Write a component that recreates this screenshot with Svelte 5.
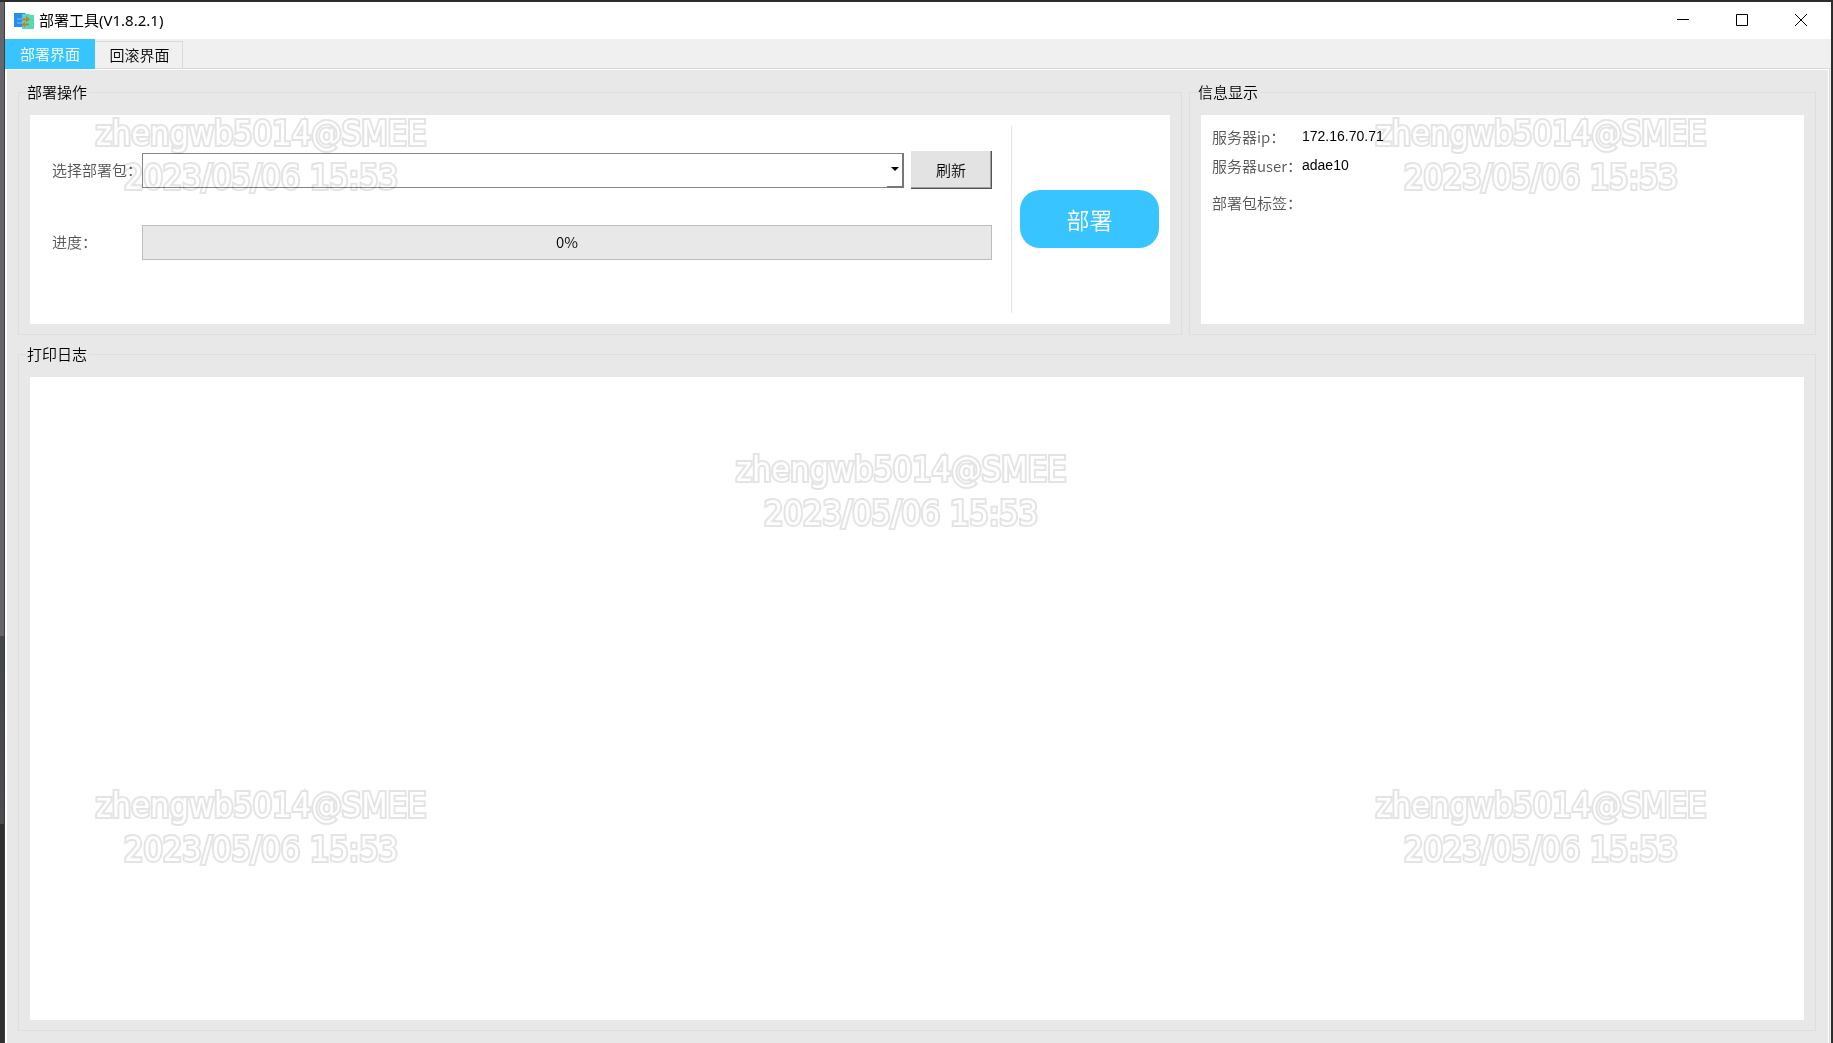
<script lang="ts">
	let tabs = ['部署界面', '回滚界面'];
	let activeTab = $state(0);
	let selected = $state('');
	let progress = $state(0);

	const server = { ip: '172.16.70.71', user: 'adae10', tag: '' };

	// centre of each watermark, in percent of the window
	const marks = [
		{ x: 14.24, y: 14.9 },
		{ x: 84.07, y: 14.9 },
		{ x: 49.16, y: 47.1 },
		{ x: 14.24, y: 79.3 },
		{ x: 84.07, y: 79.3 }
	];
</script>

<div class="desktop">
	<div class="window">
		<header class="titlebar">
			<svg class="logo" width="20" height="18" viewBox="0 0 20 18">
				<path d="M0 1h11l2 2v12H0z" fill="#2b8bf2" />
				<path d="M8 2h7l1 1h4v14H8z" fill="#52dcb4" />
				<path d="M3 7h5M3 11h5" stroke="#7cc4fb" stroke-width="1" />
				<path d="M8 7.5h6M8 12.5h7" stroke="#c67a3e" stroke-width="2" />
				<path d="M12 4l4 3.5-4 3zM11 9.5l-3 3 3 3z" fill="#c67a3e" />
			</svg>
			<h1>部署工具(V1.8.2.1)</h1>
			<div class="window-buttons">
				<button aria-label="最小化">
					<svg width="12" height="12" viewBox="0 0 12 12"><path d="M0 5.5h12" stroke="#000" /></svg>
				</button>
				<button aria-label="最大化">
					<svg width="12" height="12" viewBox="0 0 12 12"><path d="M.5.5h11v11H.5z" fill="none" stroke="#000" /></svg>
				</button>
				<button aria-label="关闭">
					<svg width="12" height="12" viewBox="0 0 12 12"><path d="M0 0l12 12M12 0L0 12" stroke="#000" /></svg>
				</button>
			</div>
		</header>

		<nav class="tabs">
			{#each tabs as tab, index}
				<button class="tab" class:active={activeTab === index} onclick={() => (activeTab = index)}>{tab}</button>
			{/each}
		</nav>

		<main>
			<div class="top-row">
				<fieldset class="operate">
					<legend>部署操作</legend>
					<div class="panel operate-panel">
						<div class="form">
							<div class="row">
								<label for="package">选择部署包：</label>
								<div class="combo">
									<select id="package" bind:value={selected}>
										<option value=""></option>
									</select>
									<span class="drop">
										<svg width="8" height="5" viewBox="0 0 8 5"><path d="M0 0h8L4 4z" fill="#000" /></svg>
									</span>
								</div>
								<button class="refresh">刷新</button>
							</div>
							<div class="row">
								<span class="label" id="progress-label">进度：</span>
								<div class="progress" role="progressbar" aria-labelledby="progress-label" aria-valuenow={progress}>
									{progress}%
								</div>
							</div>
						</div>
						<div class="deploy-side">
							<button class="deploy">部署</button>
						</div>
					</div>
				</fieldset>

				<fieldset class="info">
					<legend>信息显示</legend>
					<dl class="panel info-panel">
						<dt>服务器ip：</dt>
						<dd>{server.ip}</dd>
						<dt>服务器user：</dt>
						<dd>{server.user}</dd>
						<dt class="tag">部署包标签：</dt>
						<dd class="tag">{server.tag}</dd>
					</dl>
				</fieldset>
			</div>

			<fieldset class="log">
				<legend>打印日志</legend>
				<textarea class="panel" aria-label="打印日志" readonly></textarea>
			</fieldset>
		</main>
	</div>

	<div class="marks">
		{#each marks as mark}
			<p style="left: {mark.x}%; top: {mark.y}%">zhengwb5014@SMEE<br />2023/05/06 15:53</p>
		{/each}
	</div>
</div>

<style>
	:global(body) {
		margin: 0;
	}

	.desktop {
		position: relative;
		display: flex;
		box-sizing: border-box;
		min-height: 100vh;
		padding: 2px 2px 0 4px;
		overflow: hidden;
		background: linear-gradient(#656669 61%, #434649 61%, #4b4d50 79%, #303030 79%);
		font-family: "Noto Sans CJK SC", sans-serif;
		font-size: 15px;
		font-weight: 350;
		color: #000;
		box-shadow: inset 0 2px #2d2d2d, inset -2px 0 #2d2d2d;
	}

	button {
		font: inherit;
		color: inherit;
		padding: 0;
		border: 0;
		background: none;
	}

	.window {
		flex: 1;
		display: flex;
		flex-direction: column;
		background: #f0f0f0;
		border-left: 1px solid #3c3c3e;
	}

	.titlebar {
		display: flex;
		align-items: center;
		height: 37px;
		padding: 0 1px 0 9px;
		background: #fff;
	}

	.titlebar h1 {
		margin: 0 auto 0 5px;
		padding-bottom: 2px;
		font-family: "Noto Sans", "Noto Sans CJK SC", sans-serif;
		font-size: 15px;
		font-weight: 400;
		color: #000;
	}

	.window-buttons {
		display: flex;
	}

	.window-buttons button {
		display: flex;
		align-items: center;
		justify-content: center;
		width: 59px;
		height: 35px;
		padding-bottom: 2px;
	}

	.tabs {
		display: flex;
		align-items: flex-end;
		height: 30px;
		box-shadow: inset 0 -1px #d9d9d9;
	}

	.tab {
		box-sizing: border-box;
		width: 88px;
		height: 28px;
		padding: 0 0 2px 2px;
		border: 1px solid #d9d9d9;
		border-left: 0;
	}

	.tab.active {
		width: 90px;
		height: 30px;
		padding-left: 0;
		border: 0;
		background: #38c5ff;
		color: #fff;
	}

	main {
		flex: 1;
		display: flex;
		flex-direction: column;
		gap: 9px;
		margin-right: 2px;
		padding: 12px 12px 12px 11px;
		background: #e8e8e8;
		border: 1px solid #fff;
		border-left-width: 2px;
		border-bottom: 0;
		box-shadow: 1px 0 #d9d9d9;
	}

	.top-row {
		display: flex;
		gap: 7px;
	}

	fieldset {
		display: flex;
		min-width: 0;
		margin: 0;
		padding: 12px 7px 10px;
		border: 1px solid #dedede;
	}

	legend {
		padding: 0 2px 2px 1px;
		line-height: 19px;
	}

	.operate {
		flex: 1148 1 0;
	}

	.info {
		flex: 611 1 0;
	}

	.log {
		flex: 1;
	}

	.panel {
		flex: 1;
		box-sizing: border-box;
		margin: 0 4px;
		background: #fff;
	}

	textarea {
		padding: 8px;
		border: 0;
		outline: 0;
		resize: none;
		font: inherit;
	}

	.operate-panel {
		display: flex;
		height: 209px;
		padding: 11px 11px 11px 22px;
	}

	.form {
		flex: 1;
		display: flex;
		flex-direction: column;
		gap: 34px;
		padding: 25px 19px 0 0;
	}

	.row {
		display: flex;
		align-items: center;
		height: 38px;
	}

	.row label,
	.label {
		width: 90px;
		padding-bottom: 2px;
		color: #555;
		white-space: nowrap;
	}

	.combo {
		position: relative;
		flex: 1;
		height: 35px;
		margin-right: 7px;
	}

	select {
		appearance: none;
		width: 100%;
		height: 100%;
		padding: 0 24px 0 8px;
		border: 1px solid #868686;
		border-right: 2px solid #777;
		border-radius: 0;
		background: #fff;
		font: inherit;
	}

	.drop {
		position: absolute;
		right: 0;
		bottom: 0;
		display: flex;
		align-items: center;
		justify-content: center;
		box-sizing: border-box;
		width: 17px;
		height: 35px;
		border: solid #777;
		border-width: 0 2px 2px 0;
		pointer-events: none;
	}

	.refresh {
		width: 81px;
		height: 38px;
		border-right: 1px solid #555;
		border-bottom: 1px solid #555;
		background: #e3e3e3;
		box-shadow: inset -1px -1px #a0a0a0;
	}

	.progress {
		flex: 1;
		box-sizing: border-box;
		height: 35px;
		border: 1px solid #bcbcbc;
		background: #e8e8e8;
		line-height: 31px;
		text-align: center;
	}

	.deploy-side {
		display: flex;
		align-items: center;
		padding-left: 8px;
		border-left: 1px solid #e3e3e3;
	}

	.deploy {
		width: 139px;
		height: 58px;
		margin-bottom: 2px;
		border-radius: 20px;
		background: #38c5ff;
		color: #fff;
		font-size: 23px;
	}

	.info-panel {
		display: grid;
		grid-template-columns: 90px 1fr;
		align-content: start;
		padding: 7px 11px;
		line-height: 29px;
	}

	dt {
		color: #555;
		white-space: nowrap;
	}

	dd {
		margin: 0;
		font-family: "Liberation Sans", Arial, sans-serif;
		font-size: 14px;
		color: #000;
	}

	.tag {
		margin-top: 8px;
	}

	/* multiply keeps the white inside of the letters see-through */
	.marks {
		position: absolute;
		inset: 0;
		mix-blend-mode: multiply;
		pointer-events: none;
	}

	.marks p {
		position: absolute;
		margin: 0;
		transform: translate(-50%, -50%);
		font-family: "DejaVu Sans Condensed", "DejaVu Sans", sans-serif;
		font-size: 34px;
		font-weight: 400;
		line-height: 44px;
		text-align: center;
		white-space: nowrap;
		color: #fff;
		-webkit-text-stroke: 4px #e4e4e4;
		paint-order: stroke fill;
	}
</style>
